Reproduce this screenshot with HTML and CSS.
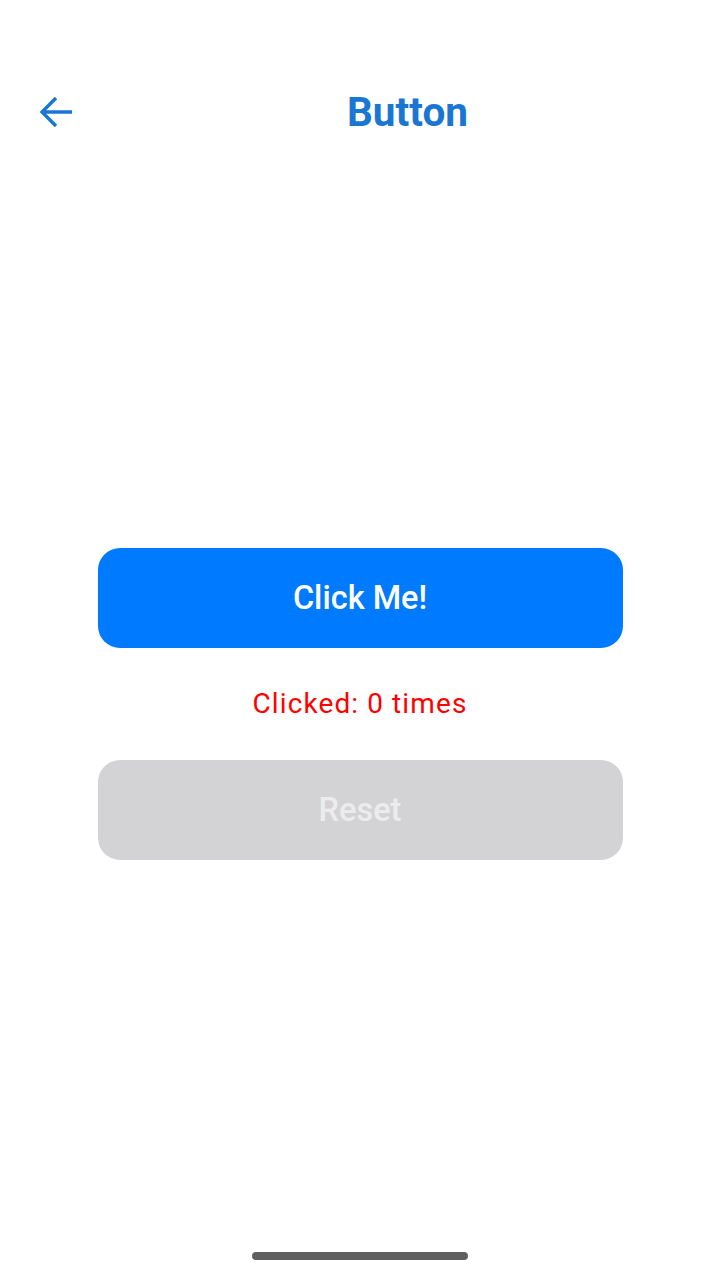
FILE: index.html
```html
<!DOCTYPE html>
<html>
<head>
<meta charset="utf-8">
<link rel="stylesheet" href="styles.css">
</head>
<body>
<div class="screen">
  <header class="topbar">
    <button class="back" aria-label="Back">
      <svg width="34" height="34" viewBox="0 0 34 34"><path d="M33 17H3.5M17 3L3 17L17 31" fill="none" stroke="#1976d2" stroke-width="3.4"/></svg>
    </button>
    <h1 class="title">Button</h1>
  </header>
  <main class="content">
    <button class="btn btn-primary">Click Me!</button>
    <p class="count">Clicked: 0 times</p>
    <button class="btn btn-disabled" disabled>Reset</button>
  </main>
  <footer class="homebar"><span class="indicator"></span></footer>
</div>
</body>
</html>
```
FILE: styles.css
```css
html, body {
  margin: 0;
  padding: 0;
  background: #ffffff;
}
.screen {
  width: 720px;
  height: 1280px;
  display: flex;
  flex-direction: column;
  font-family: Roboto, "Noto Sans", sans-serif;
}
.topbar {
  height: 50px;
  margin-top: 87px;
  margin-bottom: 33px;
  display: flex;
  align-items: center;
}
.back {
  border: 0;
  background: none;
  padding: 0;
  margin-left: 39px;
  width: 34px;
  height: 34px;
  display: flex;
}
.title {
  margin: 0;
  flex: 1;
  text-align: center;
  font-size: 40.5px;
  font-weight: 700;
  color: #1976d2;
  line-height: 50px;
  padding-left: 22px;
}
.content {
  flex: 1;
  display: flex;
  flex-direction: column;
  align-items: center;
  justify-content: center;
}
.btn {
  width: 525px;
  height: 100px;
  border: 0;
  border-radius: 22px;
  font-family: Roboto, sans-serif;
  font-size: 32.5px;
  font-weight: 500;
}
.btn-primary {
  background: #007aff;
  color: #ffffff;
}
.btn-disabled {
  background: #d3d3d5;
  color: #ececed;
}
.count {
  margin: 34px 0 34px;
  color: #ff0000;
  font-size: 28px;
  letter-spacing: 1.1px;
  line-height: 44px;
}
.homebar {
  height: 42px;
  display: flex;
  justify-content: center;
}
.indicator {
  width: 216px;
  height: 8px;
  border-radius: 4px;
  background: #5f5f5f;
  margin-top: 14px;
}
```
